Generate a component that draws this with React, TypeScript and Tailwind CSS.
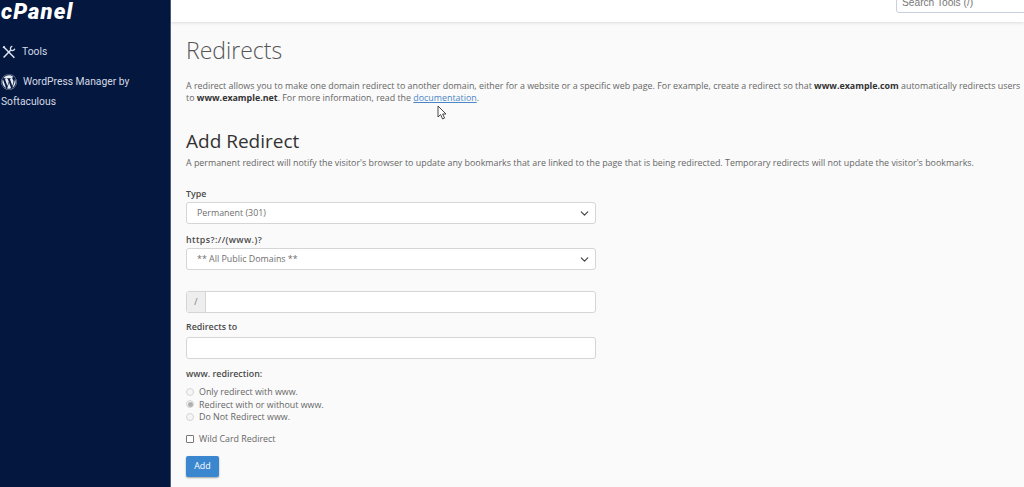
import { ChevronDown } from "lucide-react";
import { FaWordpress } from "react-icons/fa";

const openSans = "font-['Open_Sans',sans-serif]";

function ToolsIcon() {
  return (
    <svg width="14" height="14" viewBox="0 0 14 14" fill="none" stroke="#dfe4ee" strokeWidth="1.5">
      <path d="M1.4 1.6 L3 3.2 L12.4 12.8" />
      <path d="M2.6 1.2 L1 2.8" strokeWidth="1.2" />
      <path d="M8.6 5.2 L1.6 12.4" />
      <path d="M12.8 3.8 a2.5 2.5 0 0 1 -3.9 1.2 a2.5 2.5 0 0 1 1.4 -3.9" strokeWidth="1.3" />
    </svg>
  );
}

function Cursor() {
  return (
    <svg className="absolute left-[437px] top-[105px]" width="11" height="15" viewBox="0 0 11 15">
      <path d="M1 1 V12 L3.6 9.6 L5.6 14 L7.6 13 L5.6 9 H9 Z" fill="#fff" stroke="#333" strokeWidth="0.9" />
    </svg>
  );
}

function Select({ value }: { value: string }) {
  return (
    <div className="flex h-[22px] w-[410px] items-center justify-between rounded-[3px] border border-[#d5d5d5] bg-white pl-[10px] pr-[4px] text-[8.9px] text-[#6f6f6f]">
      <span>{value}</span>
      <ChevronDown size={13} strokeWidth={2.2} className="text-[#444]" />
    </div>
  );
}

function Radio({ label, checked }: { label: string; checked?: boolean }) {
  return (
    <div className="flex h-[12.5px] items-center gap-[5px] text-[8.9px] text-[#666]">
      <span className="flex h-[8px] w-[8px] items-center justify-center rounded-full border border-[#d5d5d5] bg-[#f5f5f5]">
        {checked ? <span className="h-[5px] w-[5px] rounded-full bg-[#b0b0b0]" /> : null}
      </span>
      <span>{label}</span>
    </div>
  );
}

export default function App() {
  return (
    <div className={`relative flex h-[487px] w-[1024px] overflow-hidden bg-[#fafafa] ${openSans}`}>
      <aside className="w-[171px] shrink-0 border-r border-[#4d5b80] bg-[#03173f] text-[#d5dae5]">
        <div className="h-[28px] pl-[1px] font-['Roboto',sans-serif] text-[22px] font-black italic leading-[24px] tracking-[1.1px] text-white">
          cPanel
        </div>
        <div className="mt-[14px] flex h-[20px] items-center gap-[6px] pl-[2px] font-['Roboto',sans-serif] text-[10.3px]">
          <ToolsIcon />
          <span>Tools</span>
        </div>
        <div className="mt-[10px] pl-[1px] font-['Roboto',sans-serif] text-[10.3px] leading-[20px]">
          <div className="flex items-center gap-[6px]">
            <FaWordpress size={16} className="text-[#e6e9f0]" />
            <span>WordPress Manager by</span>
          </div>
          <div>Softaculous</div>
        </div>
      </aside>

      <div className="min-w-0 flex-1">
        <header className="relative h-[22px] bg-white shadow-[0_1px_3px_rgba(0,0,0,0.12)]">
          <div className="absolute left-[725px] top-[-9px] flex h-[22px] w-[200px] items-center rounded-[3px] border border-[#c9cfe0] bg-white pl-[5px] pt-[1px] font-['Liberation_Sans',sans-serif] text-[10.2px] text-[#777]">
            Search Tools (/)
          </div>
        </header>

        <main className="pl-[15px]">
          <h1 className="mt-[13px] text-[23px] font-light leading-[30px] text-[#555]">Redirects</h1>
          <p className="mt-[15px] text-[8.9px] leading-[12px] text-[#666]">
            A redirect allows you to make one domain redirect to another domain, either for a website or a specific web page. For example, create a redirect so that <b className="text-[#333]">www.example.com</b> automatically redirects users to <b className="text-[#333]">www.example.net</b>. For more information, read the <a className="text-[#4a86c5] underline">documentation</a>.
          </p>
          <h2 className="mt-[25px] text-[19px] leading-[25px] text-[#333]">Add Redirect</h2>
          <p className="mt-[2px] text-[8.9px] leading-[14px] text-[#666]">
            A permanent redirect will notify the visitor's browser to update any bookmarks that are linked to the page that is being redirected. Temporary redirects will not update the visitor's bookmarks.
          </p>

          <label className="mt-[17px] block text-[8.9px] font-semibold leading-[14px] text-[#4a4a4a]">Type</label>
          <div className="mt-[1px]"><Select value="Permanent (301)" /></div>
          <label className="mt-[9px] block text-[8.9px] font-semibold leading-[14px] tracking-[0.4px] text-[#4a4a4a]">https?://(www.)?</label>
          <div className="mt-[1px]"><Select value="** All Public Domains **" /></div>

          <div className="mt-[21px] flex h-[22px] w-[410px] rounded-[3px] border border-[#d5d5d5] bg-white">
            <span className="flex w-[19px] items-center justify-center border-r border-[#d5d5d5] bg-[#eeeeee] text-[8.9px] text-[#777]">/</span>
          </div>

          <label className="mt-[7px] block text-[8.9px] font-semibold leading-[14px] text-[#4a4a4a]">Redirects to</label>
          <div className="mt-[3px] h-[22px] w-[410px] rounded-[3px] border border-[#d5d5d5] bg-white" />

          <div className="mt-[8px] text-[8.9px] font-semibold leading-[14px] text-[#4a4a4a]">www. redirection:</div>
          <div className="mt-[4.5px]">
            <Radio label="Only redirect with www." />
            <Radio label="Redirect with or without www." checked />
            <Radio label="Do Not Redirect www." />
          </div>
          <div className="mt-[9.5px] flex h-[13px] items-center gap-[5px] text-[8.9px] text-[#666]">
            <span className="h-[8px] w-[8px] rounded-[1px] border border-[#777] bg-white" />
            <span>Wild Card Redirect</span>
          </div>
          <button type="button" className="mt-[10px] h-[21px] w-[33px] rounded-[2px] bg-[#3a87cf] text-[8.9px] text-white shadow-[0_1px_2px_rgba(0,0,0,0.35)]">Add</button>
        </main>
      </div>
      <Cursor />
    </div>
  );
}
